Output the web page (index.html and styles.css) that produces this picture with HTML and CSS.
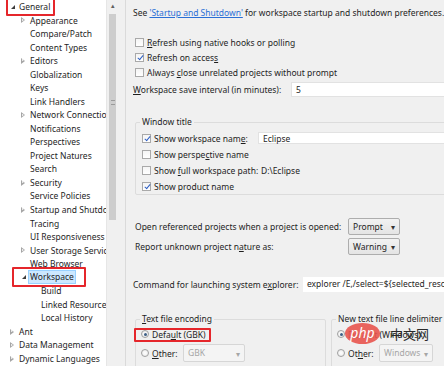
FILE: index.html
```html
<!DOCTYPE html>
<html lang="en">
  <head>
    <meta charset="UTF-8" />
    <title>Preferences - Workspace</title>
    <link rel="stylesheet" href="styles.css">
  </head>
  <body>
    <div class="window">
      <!-- preference tree -->
      <div class="tree-pane">
        <div class="tree">
          <div class="node l1"><span class="boxed box-general"><span class="twisty open"></span>General</span></div>
          <div class="node l2"><span class="twisty closed"></span>Appearance</div>
          <div class="node l2"><span class="twisty"></span>Compare/Patch</div>
          <div class="node l2"><span class="twisty"></span>Content Types</div>
          <div class="node l2"><span class="twisty closed"></span>Editors</div>
          <div class="node l2"><span class="twisty"></span>Globalization</div>
          <div class="node l2"><span class="twisty"></span>Keys</div>
          <div class="node l2"><span class="twisty"></span>Link Handlers</div>
          <div class="node l2"><span class="twisty closed"></span>Network Connections</div>
          <div class="node l2"><span class="twisty"></span>Notifications</div>
          <div class="node l2"><span class="twisty"></span>Perspectives</div>
          <div class="node l2"><span class="twisty"></span>Project Natures</div>
          <div class="node l2"><span class="twisty"></span>Search</div>
          <div class="node l2"><span class="twisty closed"></span>Security</div>
          <div class="node l2"><span class="twisty"></span>Service Policies</div>
          <div class="node l2"><span class="twisty closed"></span>Startup and Shutdown</div>
          <div class="node l2"><span class="twisty"></span>Tracing</div>
          <div class="node l2"><span class="twisty"></span>UI Responsiveness</div>
          <div class="node l2"><span class="twisty closed"></span>User Storage Service</div>
          <div class="node l2"><span class="twisty"></span>Web Browser</div>
          <div class="node l2"><span class="boxed box-workspace"><span class="twisty open"></span><span class="selected">Workspace</span></span></div>
          <div class="node l3"><span class="twisty"></span>Build</div>
          <div class="node l3"><span class="twisty"></span>Linked Resources</div>
          <div class="node l3"><span class="twisty"></span>Local History</div>
          <div class="node l1"><span class="twisty closed"></span>Ant</div>
          <div class="node l1"><span class="twisty closed"></span>Data Management</div>
          <div class="node l1"><span class="twisty closed"></span>Dynamic Languages</div>
        </div>
        <div class="scrollbar">
          <div class="arrow">&#9652;</div>
          <div class="thumb"><span class="grip"></span></div>
        </div>
      </div>

      <div class="sash"></div>

      <!-- workspace page -->
      <div class="page">
        <div class="intro">See <a href="#">'Startup and Shutdown'</a> for workspace startup and shutdown preferences.</div>

        <div class="checks">
          <div class="row"><span class="cb"></span><span><u>R</u>efresh using native hooks or polling</span></div>
          <div class="row"><span class="cb on"></span><span>Refresh on acces<u>s</u></span></div>
          <div class="row"><span class="cb"></span><span>Always <u>c</u>lose unrelated projects without prompt</span></div>
        </div>

        <div class="row field-row interval">
          <span class="label"><u>W</u>orkspace save interval (in minutes):</span>
          <span class="input">5</span>
        </div>

        <fieldset class="group title-group">
          <legend>Window title</legend>
          <div class="row grow">
            <span class="cb on"></span><span class="label w-name">Show workspace nam<u>e</u>:</span>
            <span class="input">Eclipse</span>
          </div>
          <div class="row grow"><span class="cb"></span><span>Show perspe<u>c</u>tive name</span></div>
          <div class="row grow">
            <span class="cb"></span><span class="label w-name">Show <u>f</u>ull workspace path:</span>
            <span class="plain">D:\Eclipse</span>
          </div>
          <div class="row grow"><span class="cb on"></span><span>Show product name</span></div>
        </fieldset>

        <div class="row combo-row first-combo">
          <span class="label w-open">Open referenced projects when a project is opened:</span>
          <span class="select">Prompt</span>
        </div>
        <div class="row combo-row">
          <span class="label w-open">Report unknown project n<u>a</u>ture as:</span>
          <span class="select">Warning</span>
        </div>

        <div class="row field-row command">
          <span class="label">Command for launching system e<u>x</u>plorer:</span>
          <span class="input">explorer /E,/select=${selected_resource_loc}</span>
        </div>

        <div class="groups">
          <fieldset class="group enc-group">
            <legend><u>T</u>ext file encoding</legend>
            <div class="row radio-row"><span class="boxed box-default"><span class="radio on"></span><span>Defa<u>u</u>lt (GBK)</span></span></div>
            <div class="row radio-row other">
              <span class="radio"></span><span class="label w-other"><u>O</u>ther:</span>
              <span class="select disabled enc">GBK</span>
            </div>
          </fieldset>
          <fieldset class="group delim-group">
            <legend>New text file line delimiter</legend>
            <div class="row radio-row"><span class="radio on"></span><span>Default (Windows)</span></div>
            <div class="row radio-row other">
              <span class="radio"></span><span class="label w-other">Ot<u>h</u>er:</span>
              <span class="select disabled delim">Windows</span>
            </div>
          </fieldset>
        </div>
      </div>

      <div class="watermark"><span class="php">php</span><span class="cn">中文网</span></div>
    </div>
  </body>
</html>
```

FILE: styles.css
```css
body {
  margin: 0;
  background-color: #f0f0f0;
  font-family: "Noto Sans", "Noto Sans CJK SC", sans-serif;
  font-size: 8.5px;
  color: #1e1e1e;
  overflow: hidden;
}
u {
  text-decoration: underline;
}
.window {
  display: flex;
  width: 444px;
  height: 366px;
  overflow: hidden;
  position: relative;
}

/* tree */
.tree-pane {
  display: flex;
  width: 118px;
  height: 366px;
  background-color: #ffffff;
  flex-shrink: 0;
}
.tree {
  width: 106px;
  overflow: hidden;
  white-space: nowrap;
}
.node {
  height: 13.54px;
  line-height: 13.54px;
  display: flex;
  align-items: center;
}
.l1 {
  padding-left: 8px;
}
.l2 {
  padding-left: 19px;
}
.l3 {
  padding-left: 30px;
}
.twisty {
  width: 11px;
  height: 10px;
  flex-shrink: 0;
  position: relative;
}
.twisty.closed::before {
  content: "";
  position: absolute;
  left: 2px;
  top: 2px;
  border-left: 4px solid #a6a6a6;
  border-top: 3px solid transparent;
  border-bottom: 3px solid transparent;
}
.twisty.closed::after {
  content: "";
  position: absolute;
  left: 3px;
  top: 3.5px;
  border-left: 2px solid #ffffff;
  border-top: 1.5px solid transparent;
  border-bottom: 1.5px solid transparent;
}
.twisty.open::before {
  content: "";
  position: absolute;
  left: 3px;
  top: 3px;
  border-right: 4px solid #3c3c3c;
  border-top: 4px solid transparent;
}
.boxed {
  position: relative;
  display: flex;
  align-items: center;
}
.boxed::after {
  content: "";
  position: absolute;
  border: 2px solid #e5262b;
  border-radius: 1px;
}
.box-general::after {
  left: -2px;
  right: -5px;
  top: -6px;
  bottom: -2px;
}
.box-workspace::after {
  left: -7px;
  right: -10px;
  top: -3px;
  bottom: -3px;
}
.box-default::after {
  left: -7px;
  right: -5px;
  top: -1px;
  bottom: -2px;
}
.selected {
  background-color: #cce8ff;
  border: 1px solid #99d1ff;
  padding: 0 1px;
  line-height: 12px;
  margin-left: -2px;
}
.scrollbar {
  width: 12px;
  background-color: #f0f0f0;
  border-left: 1px solid #e6e6e6;
  box-sizing: border-box;
}
.arrow {
  height: 12px;
  font-size: 7px;
  line-height: 12px;
  text-align: center;
  color: #606060;
}
.thumb {
  margin: 2px 2px 0 2px;
  height: 206px;
  background-color: #cdcdcd;
  display: flex;
  justify-content: center;
  align-items: center;
}
.grip {
  width: 4px;
  height: 5px;
  border-top: 1px solid #9a9a9a;
  border-bottom: 1px solid #9a9a9a;
  box-sizing: border-box;
  margin-top: -30px;
}
.sash {
  width: 8px;
  flex-shrink: 0;
  border-right: 1px solid #dadada;
  box-sizing: border-box;
}

/* page */
.page {
  padding: 6px 0 0 7px;
  white-space: nowrap;
  flex-shrink: 0;
  width: 330px;
}
.intro {
  height: 14px;
  line-height: 14px;
}
.intro a {
  color: #2b6fd6;
}
.checks {
  margin-top: 15px;
}
.row {
  display: flex;
  align-items: center;
}
.checks .row {
  height: 15px;
}
.cb {
  width: 9px;
  height: 9px;
  border: 1px solid #a9a9a9;
  box-sizing: border-box;
  background: linear-gradient(#f4f4f4, #ffffff);
  margin: 0 3px 0 2px;
  flex-shrink: 0;
  position: relative;
}
.cb.on::after {
  content: "";
  position: absolute;
  left: 2.5px;
  top: 0px;
  width: 2px;
  height: 5px;
  border-right: 1.5px solid #2d5fc4;
  border-bottom: 1.5px solid #2d5fc4;
  transform: rotate(40deg);
}
.input {
  background-color: #ffffff;
  border: 1px solid #e2e2e2;
  height: 15px;
  line-height: 13px;
  padding-left: 4px;
  box-sizing: border-box;
  flex-grow: 1;
}
.field-row.interval {
  margin-top: 1px;
  height: 17px;
}
.interval .label {
  width: 158px;
  flex-shrink: 0;
}
.group {
  border: 1px solid #dcdcdc;
  border-radius: 2px;
  margin: 0;
  padding: 2px 0 0 4px;
}
.group legend {
  padding: 0 2px;
  height: 12px;
  line-height: 12px;
}
.title-group {
  margin: 18px 0 0 2px;
  width: 330px;
}
.title-group .row {
  height: 16px;
}
.w-name {
  width: 104px;
  flex-shrink: 0;
}
.title-group .input {
  height: 12px;
  line-height: 11px;
}
.plain {
  padding-left: 3px;
}
.combo-row {
  height: 18px;
  padding-left: 2px;
}
.first-combo {
  margin-top: 22px;
}
.combo-row + .combo-row {
  margin-top: 2px;
}
.w-open {
  width: 213px;
  flex-shrink: 0;
}
.select {
  width: 52px;
  height: 17px;
  line-height: 15px;
  box-sizing: border-box;
  border: 1px solid #adadad;
  border-radius: 2px;
  background: linear-gradient(#f2f2f2, #e4e4e4);
  padding-left: 4px;
  position: relative;
}
.select::after {
  content: "\25BE";
  position: absolute;
  right: 4px;
  top: 0;
  font-size: 8px;
  color: #333333;
}
.select.disabled {
  border-color: #d6d6d6;
  background: #f4f4f4;
  color: #a6a6a6;
  height: 18px;
  line-height: 16px;
}
.select.disabled::after {
  color: #a6a6a6;
  top: 1px;
}
.enc {
  width: 62px;
}
.delim {
  width: 54px;
}
.field-row.command {
  margin-top: 21px;
  height: 16px;
}
.command .label {
  width: 170px;
  flex-shrink: 0;
}
.command .input {
  height: 15px;
  border: none;
}
.groups {
  display: flex;
  margin: 21px 0 0 2px;
  gap: 5px;
}
.enc-group {
  width: 197px;
  box-sizing: border-box;
  height: 60px;
}
.delim-group {
  width: 130px;
  height: 60px;
}
.radio-row {
  height: 14px;
  padding-left: 1px;
}
.radio-row.other {
  height: 18px;
  margin-top: 3px;
}
.radio {
  width: 8px;
  height: 8px;
  border-radius: 50%;
  border: 1px solid #a0a0a0;
  box-sizing: border-box;
  background: radial-gradient(#ffffff, #e8e8e8);
  margin-right: 3px;
  flex-shrink: 0;
  position: relative;
}
.radio.on::after {
  content: "";
  position: absolute;
  left: 1.5px;
  top: 1.5px;
  width: 3px;
  height: 3px;
  border-radius: 50%;
  background-color: #3d5f86;
}
.w-other {
  width: 31px;
  flex-shrink: 0;
}

/* watermark over the bottom corner */
.watermark {
  position: absolute;
  left: 345px;
  top: 323px;
  display: flex;
  align-items: center;
  gap: 10px;
}
.php {
  display: block;
  width: 35px;
  height: 21px;
  border-radius: 50%;
  background-color: rgba(232, 84, 78, 0.9);
  color: #ffffff;
  font-style: italic;
  font-size: 14px;
  line-height: 19px;
  text-align: center;
  font-family: "Noto Sans", sans-serif;
}
.cn {
  font-size: 13px;
  color: #2a2a2a;
  font-family: "Noto Sans CJK SC", sans-serif;
}
```
